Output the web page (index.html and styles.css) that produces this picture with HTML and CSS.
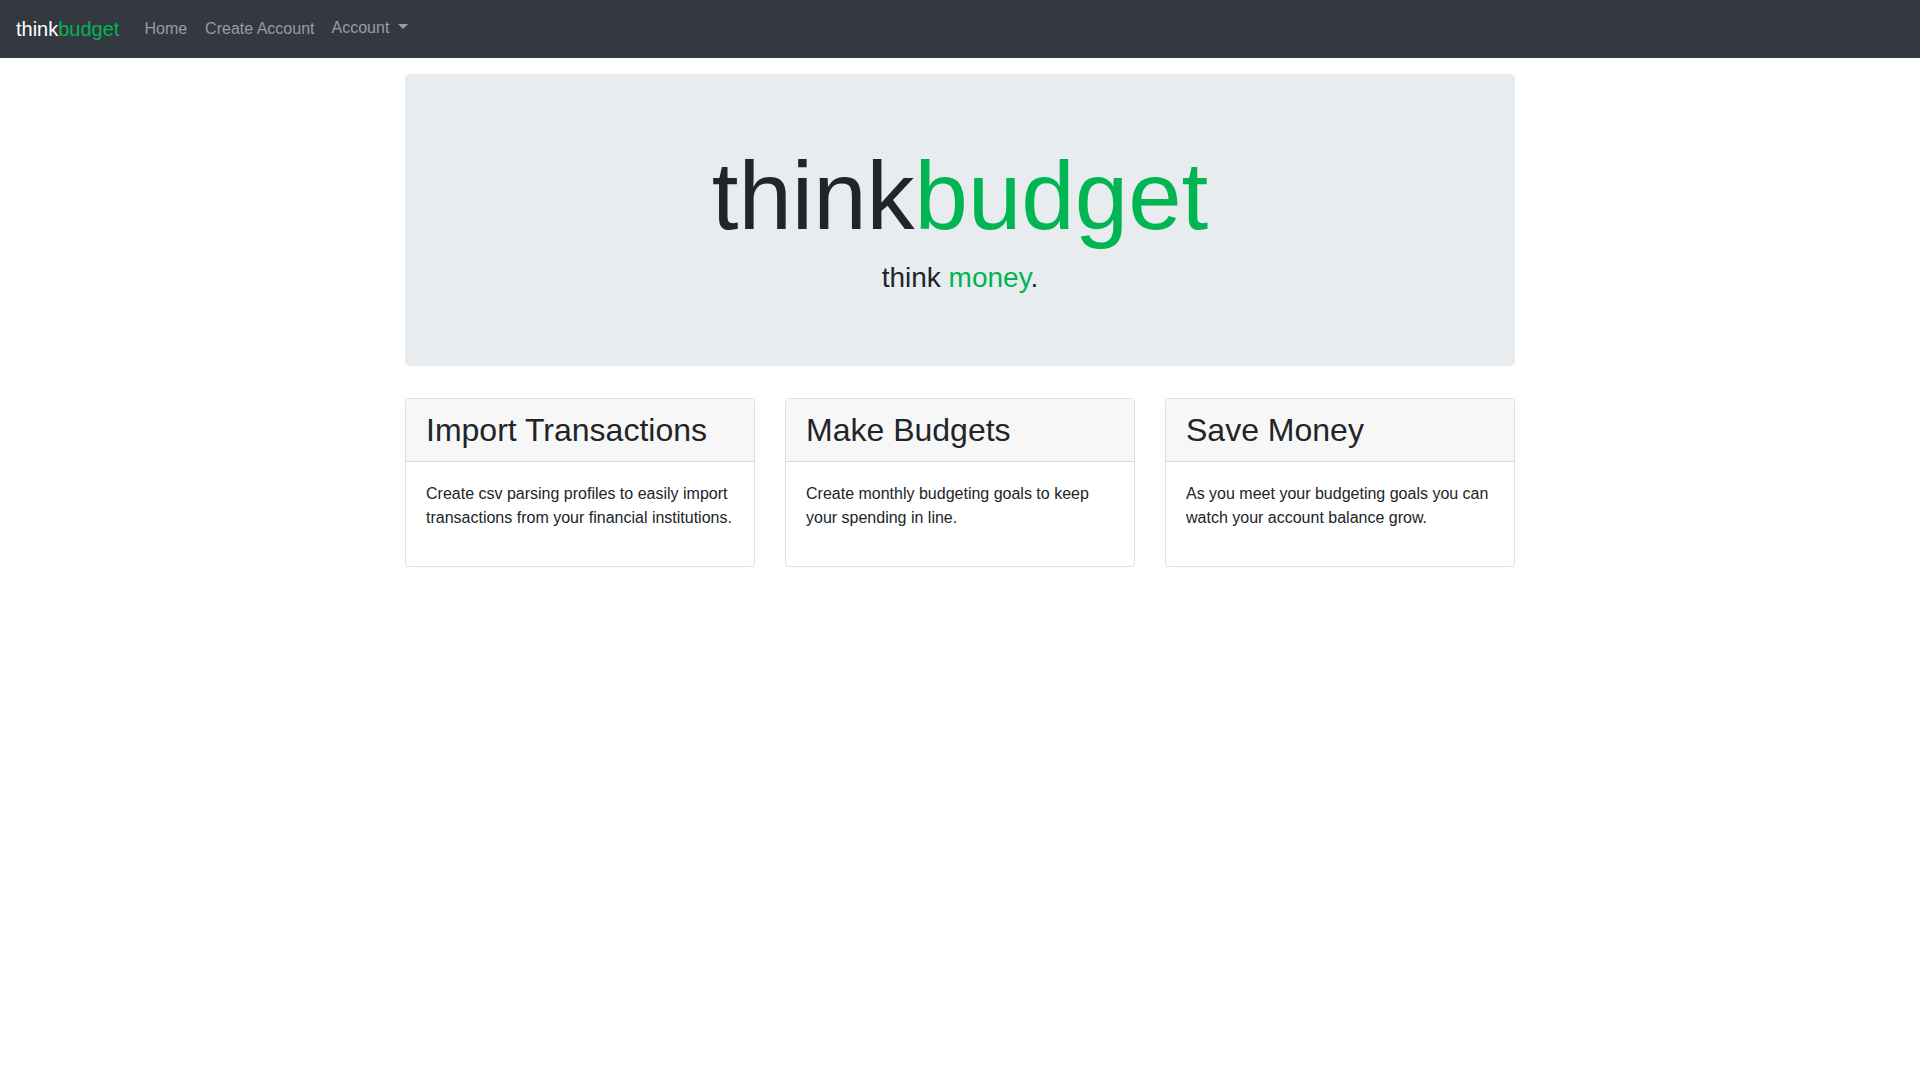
FILE: index.html
```html
<!DOCTYPE html>
<html lang="en">
<head>
<meta charset="utf-8">
<meta name="viewport" content="width=device-width, initial-scale=1">
<title>thinkbudget</title>
<link rel="stylesheet" href="styles.css">
</head>
<body>
<nav class="navbar">
  <a class="brand" href="#">think<span class="accent">budget</span></a>
  <ul class="nav-list">
    <li><a class="nav-link nav-link-outlined" href="#">Home</a></li>
    <li><a class="nav-link nav-link-outlined" href="#">Create Account</a></li>
    <li class="dropdown"><button class="nav-link dropdown-toggle" type="button" aria-haspopup="true">Account</button></li>
  </ul>
</nav>
<main class="container">
  <header class="jumbotron">
    <h1 class="title">think<span class="accent">budget</span></h1>
    <p class="tagline">think <span class="accent">money</span>.</p>
  </header>
  <div class="card-deck">
    <section class="card">
      <h2 class="card-header">Import Transactions</h2>
      <p class="card-body">Create csv parsing profiles to easily import transactions from your financial institutions.</p>
    </section>
    <section class="card">
      <h2 class="card-header">Make Budgets</h2>
      <p class="card-body">Create monthly budgeting goals to keep your spending in line.</p>
    </section>
    <section class="card">
      <h2 class="card-header">Save Money</h2>
      <p class="card-body">As you meet your budgeting goals you can watch your account balance grow.</p>
    </section>
  </div>
</main>
</body>
</html>
```
FILE: styles.css
```css
*, *::before, *::after { box-sizing: border-box; }

body {
  margin: 0;
  font-family: "Liberation Sans", Arial, sans-serif;
  font-size: 16px;
  line-height: 24px;
  color: #212529;
  background: #fff;
}

a { text-decoration: none; }

.accent { color: #00b552; }

.navbar {
  display: flex;
  align-items: center;
  padding: 8px 16px;
  background: #343840;
}

.brand {
  margin-right: 16px;
  font-size: 20px;
  line-height: 30px;
  color: #fff;
}

.nav-list {
  display: flex;
  margin: 0;
  padding: 0;
  list-style: none;
}

.nav-link {
  display: block;
  padding: 8px;
  border: 0;
  background: none;
  font: inherit;
  color: rgba(255, 255, 255, 0.5);
  cursor: pointer;
}

.nav-link-outlined { border: 1px solid transparent; }

.dropdown-toggle::after {
  content: "";
  display: inline-block;
  margin-left: 9px;
  vertical-align: 4px;
  border-top: 5px solid;
  border-right: 5px solid transparent;
  border-left: 5px solid transparent;
}

.container {
  max-width: 1140px;
  margin: 16px auto 0;
  padding: 0 15px;
}

.jumbotron {
  margin-bottom: 32px;
  padding: 64px 32px;
  border-radius: 5px;
  background: #e8ecef;
  text-align: center;
}

.title {
  margin: 0 0 8px;
  font-size: 96px;
  font-weight: 400;
  line-height: 115px;
}

.tagline {
  margin: 0 0 8px;
  font-size: 28px;
  line-height: 33px;
}

.card-deck {
  display: grid;
  grid-template-columns: repeat(3, 1fr);
  gap: 30px;
}

.card {
  border: 1px solid #dfdfdf;
  border-radius: 4px;
}

.card-header {
  margin: 0;
  padding: 12px 20px;
  border-bottom: 1px solid #d8d8d8;
  border-radius: 3px 3px 0 0;
  background: #f7f7f7;
  font-size: 32px;
  font-weight: 400;
  line-height: 38px;
}

.card-body {
  margin: 0;
  padding: 20px 20px 36px;
}

@media (max-width: 767px) {
  .card-deck { grid-template-columns: 1fr; }
  .title { font-size: 56px; line-height: 68px; }
}
```
